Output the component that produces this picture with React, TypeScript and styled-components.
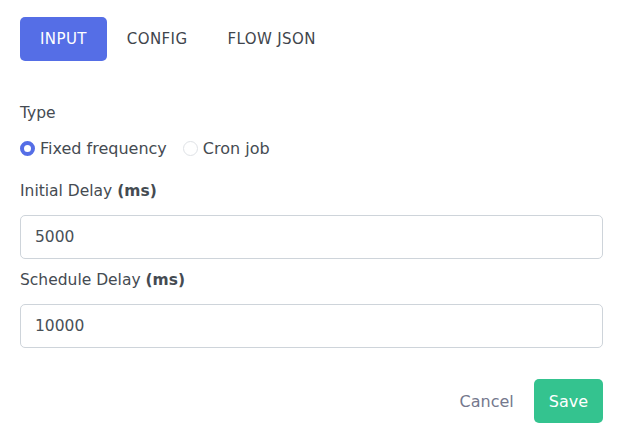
import React, { useState } from "react";
import styled, { createGlobalStyle } from "styled-components";

const Global = createGlobalStyle`
  html, body { margin: 0; padding: 0; background: #fff; }
  body { font-family: "DejaVu Sans", "Noto Sans", sans-serif; color: #495057; }
  * { box-sizing: border-box; }
`;

const Page = styled.div`
  width: 623px;
  padding: 17px 20px 24px 20px;
  display: flex;
  flex-direction: column;
`;

const Tabs = styled.div`
  display: flex;
  align-items: center;
`;

const Tab = styled.button<{ $active?: boolean }>`
  height: 44px;
  padding: 0 20px;
  border: none;
  border-radius: 5px;
  font-family: inherit;
  font-size: 15px;
  letter-spacing: 0.4px;
  cursor: pointer;
  background: ${(p) => (p.$active ? "#556ee6" : "transparent")};
  color: ${(p) => (p.$active ? "#fff" : "#3f454c")};
`;

const Field = styled.div<{ $mt: number }>`
  margin-top: ${(p) => p.$mt}px;
  display: flex;
  flex-direction: column;
`;

const Label = styled.div`
  font-size: 15.5px;
  line-height: 22px;
  color: #454b52;
  b { font-weight: 700; }
`;

const RadioRow = styled.div`
  display: flex;
  align-items: center;
  gap: 16px;
  margin-top: 13px;
  height: 22px;
`;

const RadioOption = styled.label`
  display: flex;
  align-items: center;
  gap: 5px;
  font-size: 16px;
  color: #454b52;
  cursor: pointer;
`;

const RadioDot = styled.span<{ $checked?: boolean }>`
  width: 15px;
  height: 15px;
  border-radius: 50%;
  border: ${(p) => (p.$checked ? "4px solid #556ee6" : "1px solid #dfe2e6")};
  background: #fff;
  display: inline-block;
`;

const Input = styled.input`
  margin-top: 13px;
  height: 44px;
  width: 100%;
  border: 1px solid #ced4da;
  border-radius: 5px;
  padding: 0 14px;
  font-family: inherit;
  font-size: 15.5px;
  color: #495057;
  outline: none;
`;

const Footer = styled.div`
  margin-top: 31px;
  display: flex;
  justify-content: flex-end;
  align-items: center;
  gap: 20px;
`;

const TextButton = styled.button`
  background: none;
  border: none;
  font-family: inherit;
  font-size: 16px;
  color: #74788d;
  cursor: pointer;
  padding: 0;
`;

const SaveButton = styled.button`
  height: 44px;
  padding: 0 15px;
  background: #34c38f;
  border: none;
  border-radius: 5px;
  color: #fff;
  font-family: inherit;
  font-size: 16px;
  cursor: pointer;
`;

export default function App() {
  const [type, setType] = useState("fixed");
  return (
    <Page>
      <Global />
      <Tabs>
        <Tab $active>INPUT</Tab>
        <Tab>CONFIG</Tab>
        <Tab>FLOW JSON</Tab>
      </Tabs>
      <Field $mt={41}>
        <Label>Type</Label>
        <RadioRow>
          <RadioOption onClick={() => setType("fixed")}>
            <RadioDot $checked={type === "fixed"} />
            Fixed frequency
          </RadioOption>
          <RadioOption onClick={() => setType("cron")}>
            <RadioDot $checked={type === "cron"} />
            Cron job
          </RadioOption>
        </RadioRow>
      </Field>
      <Field $mt={21}>
        <Label>
          Initial Delay <b>(ms)</b>
        </Label>
        <Input defaultValue="5000" />
      </Field>
      <Field $mt={10}>
        <Label>
          Schedule Delay <b>(ms)</b>
        </Label>
        <Input defaultValue="10000" />
      </Field>
      <Footer>
        <TextButton>Cancel</TextButton>
        <SaveButton>Save</SaveButton>
      </Footer>
    </Page>
  );
}
